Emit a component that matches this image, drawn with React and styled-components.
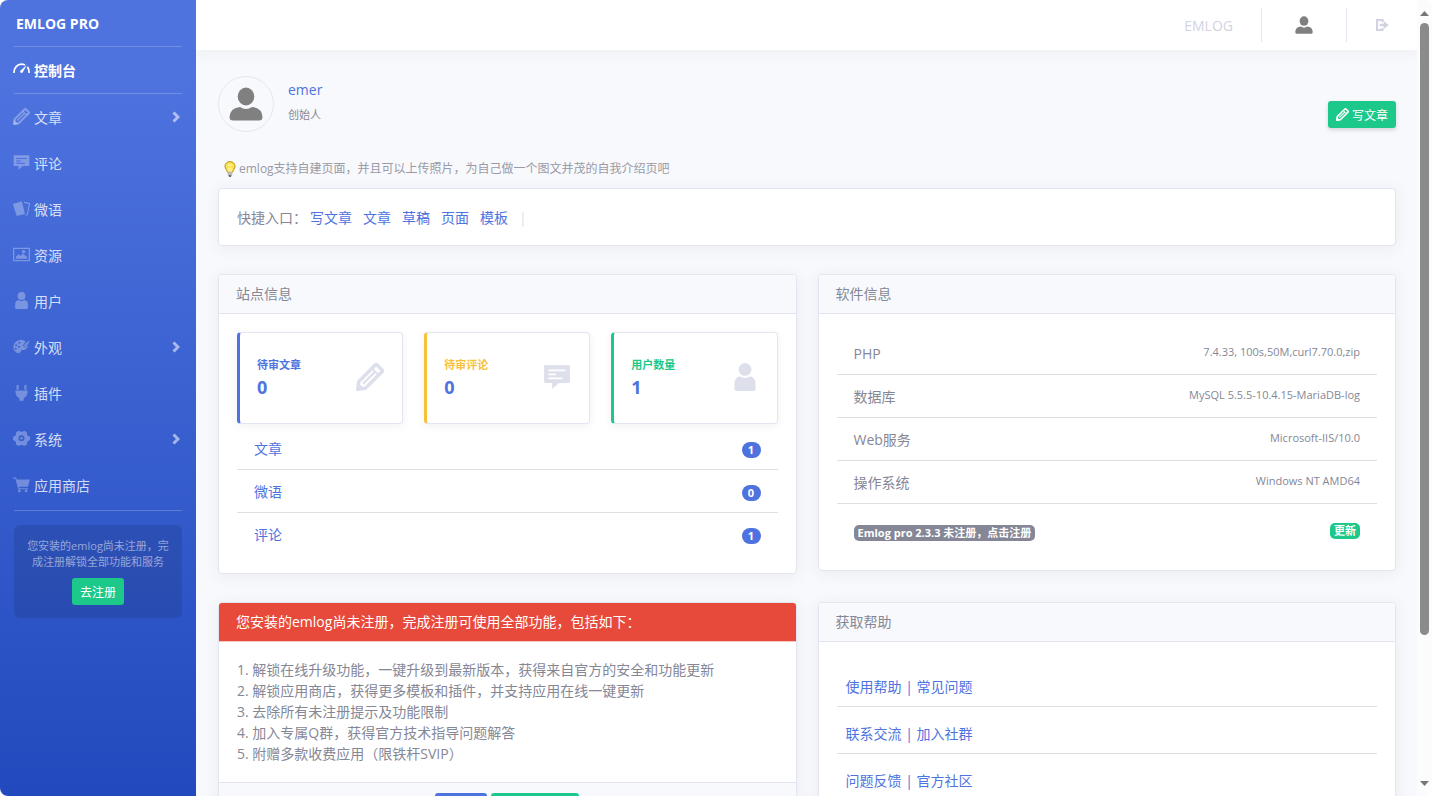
import React from 'react';
import styled, { createGlobalStyle, css } from 'styled-components';

const GlobalStyle = createGlobalStyle`
    * {
        box-sizing: border-box;
    }

    body {
        margin: 0;
        background: #fff;
        color: #858796;
        font-family: 'Open Sans', 'Noto Sans CJK SC', sans-serif;
        font-size: 14px;
        line-height: 21px;
    }

    a {
        color: #4e73df;
        text-decoration: none;
    }

    ul, ol, dl, dd, p, h1, h2 {
        margin: 0;
        padding: 0;
        list-style: none;
        font-weight: 400;
    }
`

/* ---------- icons ---------- */

const Icon = styled.svg`
    display: block;
    flex: none;
    width: ${props => props.$size}px;
    height: ${props => props.$size}px;
    fill: currentColor;
`

const DashboardIcon = ({ size }) => (
    <Icon $size={size} viewBox='0 0 24 24'>
        <path d='M1.300 17C1.300 9.500 6 4.500 12 4.500c2 0 3.500.4 5 1.200M20.300 8.300c1.800 2.200 2.500 5 2.500 8.700' fill='none' stroke='currentColor' strokeWidth='2.400' />
        <path d='M19.500 5.500L13.800 16a2 2 0 0 1-3.400-2.200z' />
    </Icon>
)

const PencilIcon = ({ size }) => (
    <Icon $size={size} viewBox='0 0 24 24'>
        <g fill='none' stroke='currentColor' strokeLinejoin='round'>
            <path d='M1.500 22.500l.8-6.500L16.500 1.800q.8-.8 1.600 0l4.100 4.100q.8.8 0 1.600L8 21.700z' strokeWidth='3' />
            <path d='M14.300 5.200l4.500 4.500' strokeWidth='1.600' />
            <path d='M6 17.800L16.300 7.500' strokeWidth='2' />
        </g>
        <path d='M.5 23.500l1-7 6 6z' />
    </Icon>
)

const CommentIcon = ({ size }) => (
    <Icon $size={size} viewBox='-1 -1 26 26'>
        <path fillRule='evenodd' d='M1 1h22q1 0 1 1v14.500q0 1-1 1h-9L7.500 23v-5.500H1q-1 0-1-1V2q0-1 1-1zM4 5v1.600h16V5zM4 8.800v1.600h7V8.800zM4 12.500v1.600h13v-1.600z' />
    </Icon>
)

const CardsIcon = ({ size }) => (
    <Icon $size={size} viewBox='0 0 24 24'>
        <path d='M.8 5.200L11.500 2.200q.9-.2 1.200.6l4 16q.2 1-.7 1.200L6 22.300q-.9.200-1.200-.7L.1 6.500q-.2-1 .7-1.300z' />
        <path d='M15.500 3.300l6.900 1.500q1 .3.800 1.300l-3 14.200q-.3 1-1.300.8h-1.500' fill='none' stroke='currentColor' strokeWidth='1.600' />
    </Icon>
)

const ImageIcon = ({ size }) => (
    <Icon $size={size} viewBox='0 0 24 24'>
        <path fillRule='evenodd' d='M0 2.500h24v19H0zM1.800 4.300v15.400h20.400V4.300z' />
        <path d='M4 18v-2.500l4-3.800 2.500 2.400 3.500-3.400 6 5V18z' />
        <circle cx='15' cy='8' r='2.400' />
    </Icon>
)

const PersonIcon = ({ size }) => (
    <Icon $size={size} viewBox='0 0 24 24'>
        <circle cx='12' cy='5.500' r='5.500' />
        <path d='M7.500 11.300q4.500 3 9 0 4.500 1.500 4.500 6v5q0 1.700-1.700 1.700H4.700Q3 24 3 22.300v-5q0-4.500 4.500-6z' />
    </Icon>
)

const PaletteIcon = ({ size }) => (
    <Icon $size={size} viewBox='0 0 24 24'>
        <path fillRule='evenodd' d='M24 3.500q-2.200 5.500-7 9l-1.800-1.500Q17.500 6.500 24 3.500zM18 4.800Q13.500 1.500 8 3.200 1.500 5.300.6 11.500 0 17 4.200 20q3.300 2.300 5.800.4 1.200-1 1.300-2.500.3-1.500 2.500-1 5 .8 6.700-3.700.5-1.600.2-3.200l-3.500 3.500-3.500-3zM9 5.200a1.500 1.500 0 1 1 0 3 1.500 1.500 0 0 1 0-3zM4.500 8.700a1.500 1.500 0 1 1 0 3 1.500 1.500 0 0 1 0-3zM3.800 13.700a1.500 1.500 0 1 1 0 3 1.500 1.500 0 0 1 0-3zM8.500 11a1.500 1.500 0 1 1 0 3 1.500 1.500 0 0 1 0-3z' />
    </Icon>
)

const PlugIcon = ({ size }) => (
    <Icon $size={size} viewBox='0 0 24 24'>
        <path d='M6.500 1q1.500 0 1.500 1.500V8H5V2.500Q5 1 6.500 1zM17.500 1Q19 1 19 2.500V8h-3V2.500Q16 1 17.500 1zM4 9h16q.7 0 .7.800-.2 7.700-5.700 10.200v3.500H9V20Q3.500 17.500 3.300 9.800 3.300 9 4 9z' />
    </Icon>
)

const GearIcon = ({ size }) => (
    <Icon $size={size} viewBox='0 0 24 24'>
        <path fillRule='evenodd' d='M8 1l3 1.500h2L16 1l3.500 2 .3 3.300 1 1.700 3.200 1.500v4.500l-3 1.700-1 1.700-.2 3.100-3.600 2.200-3-1.500h-2.400l-3 1.500-3.600-2.200L4 17.400l-1-1.700L0 14V9.500L3.200 8l1-1.700L4.500 3zM12 7.500a4.200 4.200 0 1 0 0 8.400 4.200 4.200 0 0 0 0-8.400z' />
        <circle cx='12' cy='11.700' r='1.800' />
    </Icon>
)

const CartIcon = ({ size }) => (
    <Icon $size={size} viewBox='0 0 24 24'>
        <path d='M0 2h4.500l.8 2.800H24l-3 10.500H8.500l.5 2h12v1.500H7.500L3.300 3.800H0z' />
        <circle cx='9' cy='21' r='2' />
        <circle cx='18.500' cy='21' r='2' />
    </Icon>
)

const AvatarIcon = ({ size }) => (
    <Icon $size={size} viewBox='0 0 34 34'>
        <ellipse cx='17' cy='9.500' rx='8.300' ry='9' />
        <path d='M11 20q6 4 12 0 10 1 10.500 10 0 3.500-3.500 3.500H4Q.5 33.500.5 30 1 21 11 20z' />
    </Icon>
)

const LogoutIcon = ({ size }) => (
    <Icon $size={size} viewBox='0 0 24 24'>
        <path d='M13 7V3.500H3.500v17H13V17' fill='none' stroke='currentColor' strokeWidth='3.500' />
        <path d='M8 10h7V5l8.500 7-8.500 7v-5H8z' />
    </Icon>
)

const BulbIcon = () => (
    <Icon $size={16} viewBox='0 0 16 16'>
        <path d='M8 .6c-3 0-5 2.100-5 4.800 0 2.200 1.900 3.300 2.400 5.800h5.200C11.100 8.700 13 7.600 13 5.400 13 2.700 11 .6 8 .6z' fill='#fbe34c' stroke='#b8901c' />
        <path d='M6 4.500q2-1.500 4 0M7 6.500v4.500M9 6.500v4.500' fill='none' stroke='#fffbd0' />
        <path d='M5.700 11.500h4.600v2.700H5.700z' fill='#b9bcc2' />
        <path d='M6.500 14.200h3L9 15.700H7z' fill='#3b3b3b' />
    </Icon>
)

const Chevron = styled.svg`
    width: 8px;
    height: 12px;
    margin-left: auto;
    margin-right: 2px;
    fill: none;
    stroke: rgba(255, 255, 255, 0.55);
    stroke-width: 3;
`

/* ---------- shell ---------- */

const Window = styled.div`
    display: flex;
    height: 100vh;
    overflow: hidden;
    border-radius: 8px;
    background: #f8f9fc;
`

const Sidebar = styled.nav`
    flex: 0 0 196px;
    padding: 0 14px;
    background: linear-gradient(180deg, #4e73df 10%, #224abe 100%);
    color: #fff;
`

const Brand = styled.a`
    display: flex;
    align-items: center;
    height: 46px;
    padding-left: 2px;
    color: #fff;
    font-weight: 700;
`

const Divider = styled.hr`
    margin: 0;
    border: 0;
    border-top: 1px solid rgba(255, 255, 255, 0.2);
`

const NavLink = styled.a`
    display: flex;
    align-items: center;
    gap: 4px;
    height: 46px;
    margin-left: -1px;
    color: ${props => props.$active ? '#fff' : 'rgba(255, 255, 255, 0.8)'};
    font-weight: ${props => props.$active ? 700 : 400};

    ${Icon} {
        margin-bottom: 2px;
        color: ${props => props.$active ? '#fff' : 'rgba(255, 255, 255, 0.3)'};
    }
`

const NavList = styled.ul`
    padding-bottom: 2px;
`

const RegisterCard = styled.div`
    display: flex;
    flex-direction: column;
    align-items: center;
    gap: 8px;
    margin-top: 14px;
    padding: 13px 12px;
    border-radius: 6px;
    background: rgba(0, 0, 0, 0.1);
    color: rgba(255, 255, 255, 0.5);
    font-size: 11px;
    line-height: 16px;
    text-align: center;
`

const Button = styled.button`
    display: inline-flex;
    align-items: center;
    gap: 3px;
    height: 27px;
    padding: 0 8px;
    border: 0;
    border-radius: 3px;
    background: ${props => props.$primary ? '#4e73df' : '#1cc88a'};
    color: #fff;
    font-family: inherit;
    font-size: 12px;
    cursor: pointer;
    ${props => props.$raised && css`
        box-shadow: 0 2px 4px rgba(58, 59, 69, 0.2);
    `}
`

const Page = styled.div`
    flex: 1;
    min-width: 0;
    overflow: hidden;
`

const Topbar = styled.header`
    display: flex;
    justify-content: flex-end;
    align-items: center;
    height: 50px;
    background: #fff;
    box-shadow: 0 2px 16px rgba(58, 59, 69, 0.06);
`

const TopLink = styled.a`
    display: flex;
    align-items: center;
    justify-content: center;
    height: 34px;
    padding: 0 ${props => props.$dark ? 33 : 28}px;
    color: ${props => props.$dark ? '#808080' : '#d1d3e2'};

    & + & {
        border-left: 1px solid #e3e6f0;
    }
`

const Content = styled.main`
    padding: 26px 21px 0 22px;
`

const Profile = styled.section`
    display: flex;
    gap: 14px;
    height: 56px;
    margin-bottom: 26px;

    ${Button} {
        margin: 25px 0 0 auto;
    }
`

const Avatar = styled.a`
    display: flex;
    align-items: center;
    justify-content: center;
    width: 56px;
    height: 56px;
    border: 1px solid #e3e6ea;
    border-radius: 50%;
    color: #808080;
`

const ProfileText = styled.div`
    padding-top: 3px;
`

const Role = styled.p`
    margin-top: 4px;
    font-size: 11px;
`

const Tip = styled.p`
    display: flex;
    align-items: center;
    gap: 1px;
    margin-bottom: 9px;
    padding-left: 4px;
    font-size: 12px;
    color: #999aa5;
`

const Card = styled.section`
    border: 1px solid #e3e6f0;
    border-radius: 4px;
    background: #fff;
    box-shadow: 0 2px 16px rgba(58, 59, 69, 0.07);
`

const QuickCard = styled(Card)`
    display: flex;
    align-items: center;
    gap: 11px;
    height: 58px;
    margin-bottom: 28px;
    padding: 0 18px;
`

const QuickLabel = styled.span`
    margin-right: -8px;
`

const Bar = styled.span`
    color: #dddfe6;
`

const Columns = styled.div`
    display: grid;
    grid-template-columns: 1fr 1fr;
    align-items: start;
    gap: 28px 21px;
`

const CardHeader = styled.h2`
    height: 39px;
    padding: 0 17px;
    border-bottom: 1px solid ${props => props.$danger ? '#f5c6c2' : '#e3e6f0'};
    border-radius: 3px 3px 0 0;
    background: ${props => props.$danger ? '#e74a3b' : '#f8f9fc'};
    color: ${props => props.$danger ? '#fff' : 'inherit'};
    font-size: 14px;
    line-height: 37px;
`

const CardBody = styled.div`
    padding: ${props => props.$tight ? 17 : 18}px 18px 18px;
`

const CardFooter = styled.div`
    display: flex;
    justify-content: center;
    gap: 4px;
    padding: 10px;
    border-top: 1px solid #e3e6f0;
    background: #f8f9fc;
`

const Stats = styled.div`
    display: grid;
    grid-template-columns: repeat(3, 1fr);
    gap: 21px;
    margin-bottom: 3px;
`

const Stat = styled(Card)`
    display: flex;
    align-items: center;
    justify-content: space-between;
    height: 92px;
    padding: 0 18px 3px 17px;
    border-left: 3px solid ${props => props.$color};
    box-shadow: 0 2px 8px rgba(58, 59, 69, 0.07);

    ${Icon} {
        color: #dddfeb;
    }
`

const StatLabel = styled.p`
    color: ${props => props.$color};
    font-size: 11px;
    font-weight: 700;
`

const StatValue = styled.p`
    color: #4e73df;
    font-size: 18px;
    font-weight: 700;
    line-height: 24px;
`

const Row = styled.li`
    display: flex;
    align-items: center;
    justify-content: space-between;
    height: 43px;
    padding: 0 17px;
    border-bottom: 1px solid #dddfe3;

    &:last-child {
        height: ${props => props.$tall ? 48 : 42}px;
        border-bottom: 0;
    }
`

const RowValue = styled.span`
    margin-bottom: 4px;
    font-size: 11px;
`

const Pill = styled.span`
    width: 19px;
    margin-top: 3px;
    border-radius: 8px;
    background: #4e73df;
    color: #fff;
    font-size: 11px;
    font-weight: 700;
    line-height: 16px;
    text-align: center;
`

const Badge = styled.a`
    margin-top: ${props => props.$green ? 6 : 10}px;
    padding: 0 4px;
    border-radius: 5px;
    background: ${props => props.$green ? '#1cc88a' : '#858796'};
    color: #fff;
    font-size: 11px;
    font-weight: 700;
    line-height: 16px;
`

const HelpRow = styled.li`
    padding: 16px 9px 9px;
    border-bottom: 1px solid #dddfe3;
`

const Scrollbar = styled.div`
    display: flex;
    flex: 0 0 15px;
    flex-direction: column;
    align-items: center;
    padding: 11px 0 10px;
    background: #fcfcfc;
`

const Thumb = styled.div`
    flex: 0 0 79%;
    width: 9px;
    margin: 7px 0 auto;
    border-radius: 5px;
    background: #8b8b8b;
`

const Arrow = styled.svg`
    width: 9px;
    height: 5px;
    fill: #777;
`

/* ---------- data ---------- */

const menu = [
    { name: '文章', icon: PencilIcon, more: true },
    { name: '评论', icon: CommentIcon },
    { name: '微语', icon: CardsIcon },
    { name: '资源', icon: ImageIcon },
    { name: '用户', icon: PersonIcon },
    { name: '外观', icon: PaletteIcon, more: true },
    { name: '插件', icon: PlugIcon },
    { name: '系统', icon: GearIcon, more: true },
    { name: '应用商店', icon: CartIcon },
]

const shortcuts = ['写文章', '文章', '草稿', '页面', '模板']

const stats = [
    { name: '待审文章', value: 0, color: '#4e73df', icon: PencilIcon },
    { name: '待审评论', value: 0, color: '#f6c23e', icon: CommentIcon },
    { name: '用户数量', value: 1, color: '#1cc88a', icon: PersonIcon },
]

const counts = [['文章', 1], ['微语', 0], ['评论', 1]]

const software = [
    ['PHP', '7.4.33, 100s,50M,curl7.70.0,zip'],
    ['数据库', 'MySQL 5.5.5-10.4.15-MariaDB-log'],
    ['Web服务', 'Microsoft-IIS/10.0'],
    ['操作系统', 'Windows NT AMD64'],
]

const features = [
    '1. 解锁在线升级功能，一键升级到最新版本，获得来自官方的安全和功能更新',
    '2. 解锁应用商店，获得更多模板和插件，并支持应用在线一键更新',
    '3. 去除所有未注册提示及功能限制',
    '4. 加入专属Q群，获得官方技术指导问题解答',
    '5. 附赠多款收费应用（限铁杆SVIP）',
]

const help = ['使用帮助 | 常见问题', '联系交流 | 加入社群', '问题反馈 | 官方社区']

const Menu = () => (
    <Sidebar>
        <Brand href='#'>EMLOG PRO</Brand>
        <Divider />
        <NavLink href='#' $active>
            <DashboardIcon size={17} />
            控制台
        </NavLink>
        <Divider />
        <NavList>
            {menu.map(({ name, icon: ItemIcon, more }) => (
                <li key={name}>
                    <NavLink href='#'>
                        <ItemIcon size={17} />
                        {name}
                        {more && <Chevron viewBox='0 0 8 12'><path d='M1.500 1.500L6 6l-4.500 4.500' /></Chevron>}
                    </NavLink>
                </li>
            ))}
        </NavList>
        <Divider />
        <RegisterCard>
            <p>您安装的emlog尚未注册，完成注册解锁全部功能和服务</p>
            <Button>去注册</Button>
        </RegisterCard>
    </Sidebar>
)

const App = () => {
    return (
        <Window lang='zh-CN'>
            <GlobalStyle />
            <Menu />
            <Page>
                <Topbar>
                    <TopLink href='#'>EMLOG</TopLink>
                    <TopLink href='#' $dark aria-label='emer'><AvatarIcon size={18} /></TopLink>
                    <TopLink href='#' aria-label='退出'><LogoutIcon size={14} /></TopLink>
                </Topbar>
                <Content>
                    <Profile>
                        <Avatar href='#' aria-label='emer'><AvatarIcon size={34} /></Avatar>
                        <ProfileText>
                            <a href='#'>emer</a>
                            <Role>创始人</Role>
                        </ProfileText>
                        <Button $raised><PencilIcon size={13} />写文章</Button>
                    </Profile>
                    <Tip><BulbIcon />emlog支持自建页面，并且可以上传照片，为自己做一个图文并茂的自我介绍页吧</Tip>
                    <QuickCard>
                        <QuickLabel>快捷入口：</QuickLabel>
                        {shortcuts.map(name => <a href='#' key={name}>{name}</a>)}
                        <Bar>|</Bar>
                    </QuickCard>
                    <Columns>
                        <Card>
                            <CardHeader>站点信息</CardHeader>
                            <CardBody>
                                <Stats>
                                    {stats.map(({ name, value, color, icon: StatIcon }) => (
                                        <Stat key={name} $color={color}>
                                            <div>
                                                <StatLabel $color={color}>{name}</StatLabel>
                                                <StatValue>{value}</StatValue>
                                            </div>
                                            <StatIcon size={28} />
                                        </Stat>
                                    ))}
                                </Stats>
                                <ul>
                                    {counts.map(([name, count]) => (
                                        <Row key={name}>
                                            <a href='#'>{name}</a>
                                            <Pill>{count}</Pill>
                                        </Row>
                                    ))}
                                </ul>
                            </CardBody>
                        </Card>
                        <Card>
                            <CardHeader>软件信息</CardHeader>
                            <CardBody>
                                <ul>
                                    {software.map(([name, value]) => (
                                        <Row key={name}>
                                            <span>{name}</span>
                                            <RowValue>{value}</RowValue>
                                        </Row>
                                    ))}
                                    <Row $tall>
                                        <Badge href='#'>Emlog pro 2.3.3 未注册，点击注册</Badge>
                                        <Badge href='#' $green>更新</Badge>
                                    </Row>
                                </ul>
                            </CardBody>
                        </Card>
                        <Card>
                            <CardHeader $danger>您安装的emlog尚未注册，完成注册可使用全部功能，包括如下：</CardHeader>
                            <CardBody $tight>
                                {features.map(text => <p key={text}>{text}</p>)}
                            </CardBody>
                            <CardFooter>
                                <Button $primary>去注册</Button>
                                <Button>联系官方客服</Button>
                            </CardFooter>
                        </Card>
                        <Card>
                            <CardHeader>获取帮助</CardHeader>
                            <CardBody>
                                <ul>
                                    {help.map(text => (
                                        <HelpRow key={text}><a href='#'>{text}</a></HelpRow>
                                    ))}
                                </ul>
                            </CardBody>
                        </Card>
                    </Columns>
                </Content>
            </Page>
            <Scrollbar aria-hidden='true'>
                <Arrow viewBox='0 0 9 5'><path d='M0 5L4.500 0 9 5z' /></Arrow>
                <Thumb />
                <Arrow viewBox='0 0 9 5'><path d='M0 0h9L4.500 5z' /></Arrow>
            </Scrollbar>
        </Window>
    );
}

export default App;
